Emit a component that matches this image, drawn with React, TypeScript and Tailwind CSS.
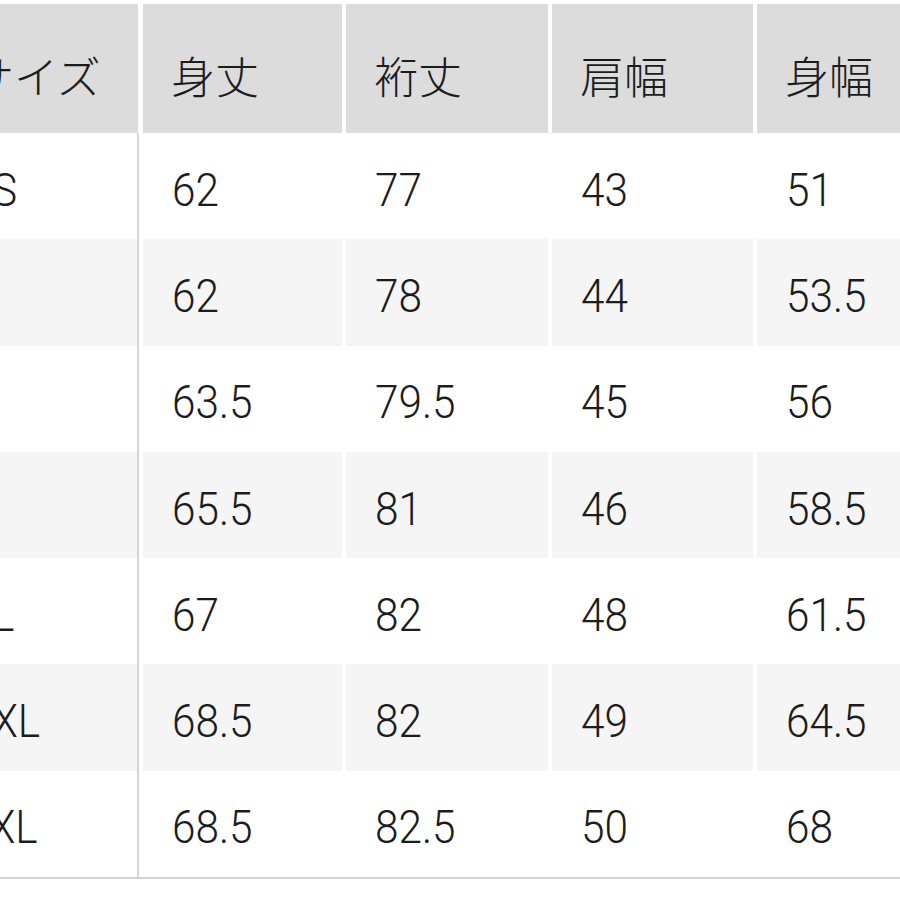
const headers = ['サイズ', '身丈', '裄丈', '肩幅', '身幅'];

const rows = [
  ['XS', '62', '77', '43', '51'],
  ['S', '62', '78', '44', '53.5'],
  ['M', '63.5', '79.5', '45', '56'],
  ['L', '65.5', '81', '46', '58.5'],
  ['XL', '67', '82', '48', '61.5'],
  ['XXL', '68.5', '82', '49', '64.5'],
  ['3XL', '68.5', '82.5', '50', '68'],
];

const cols = 'grid grid-cols-[204px_199px_202px_201px_201px] gap-x-[4px]';

export default function App() {
  return (
    <div className="w-[900px] h-[900px] overflow-hidden bg-white text-[#1c1c1c]">
      <div className="ml-[-65px] w-[1023px] pt-[4px]">
        {/* Header */}
        <div className={cols}>
          {headers.map((h, i) => (
            <div
              key={h}
              className={`h-[129px] bg-[#dcdcdc] flex items-center pt-[12px] text-[44px] leading-none font-light ${
                i === 0 ? 'pl-[35px] w-[203px]' : 'pl-[28px]'
              }`}
              style={{ fontFamily: '"Noto Sans CJK JP", "Noto Sans", sans-serif' }}
            >
              {h}
            </div>
          ))}
        </div>

        {/* Body */}
        {rows.map((row, r) => (
          <div key={r} className={cols}>
            {row.map((cell, i) => (
              <div
                key={i}
                className={`h-[106.3px] flex items-center pt-[6px] ${i === 0 ? 'pl-[31px]' : 'pl-[29px]'} ${
                  r % 2 === 1 ? 'bg-[#f5f5f5]' : 'bg-white'
                } ${i === 0 ? 'border-r-2 border-[#d6d6d6]' : ''}`}
              >
                <span
                  className="text-[47px] leading-none font-light scale-x-90 origin-left"
                  style={{ fontFamily: 'Roboto, "Liberation Sans", sans-serif' }}
                >
                  {cell}
                </span>
              </div>
            ))}
          </div>
        ))}

        <div className="h-[2px] bg-[#d2d2d2]" />
      </div>
    </div>
  );
}
